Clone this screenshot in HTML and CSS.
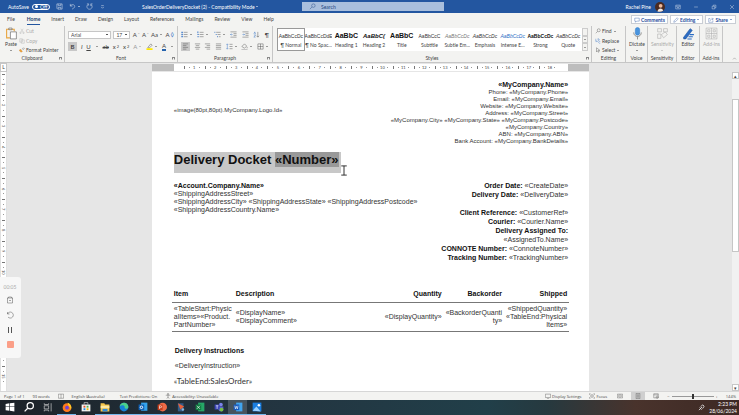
FILE: index.html
```html
<!DOCTYPE html>
<html lang="en">
<head>
    <meta charset="UTF-8">
    <meta name="viewport" content="width=device-width, initial-scale=1.0">
    <title>SalesOrderDeliveryDocket (2) - Compatibility Mode</title>
    <link rel="stylesheet" href="styles.css">
</head>
<body>

    <!-- Title bar -->
    <header class="titlebar">
        <div class="quick">
            <label class="autosave" for="autosave">AutoSave <input type="checkbox" id="autosave"><span class="switch">Off</span></label>
            <button aria-label="Save"><svg viewBox="0 0 16 16"><path d="M2 2h12v12H4l-2-2zM5 2v4h6V2M5 14v-4h6v4"/></svg></button>
            <button aria-label="Undo"><svg viewBox="0 0 16 16"><path d="M3 2v5h5M3 7c3-5 10-4 10 1 0 3-3 4-6 6"/></svg></button>
            <span class="caret"></span>
            <button aria-label="Redo"><svg viewBox="0 0 16 16"><path d="M5 3a6 6 0 1 0 6 0M11 7V2h4M2 2h4v4"/></svg></button>
            <button aria-label="Customize"><svg viewBox="0 0 16 16"><path d="M5 6h6M5 9l3 3 3-3"/></svg></button>
        </div>
        <div class="docname">SalesOrderDeliveryDocket (2) - Compatibility Mode <span class="caret"></span></div>
        <label class="search">
            <svg viewBox="0 0 16 16"><circle cx="10" cy="6" r="4"/><path d="M7 9l-5 5"/></svg>
            <input type="search" placeholder="Search" aria-label="Search">
        </label>
        <div class="account">
            <span>Rachel Pine</span>
            <svg class="avatar" viewBox="0 0 16 16"><circle cx="8" cy="8" r="8" fill="#4a2a20"/><circle cx="9" cy="6" r="3" fill="#eeb99b"/><path d="M4 15c1-6 8-6 9-1-3 2-6 2-9 1z" fill="#f2e8e2"/></svg>
        </div>
        <div class="window-buttons">
            <button aria-label="Ribbon display"><svg viewBox="0 0 16 16"><path d="M2 3h12v10H2zM2 6h12M8 12V8M6 10l2-2 2 2"/></svg></button>
            <button aria-label="Minimize"><svg viewBox="0 0 16 16"><path d="M3 8h10"/></svg></button>
            <button aria-label="Restore"><svg viewBox="0 0 16 16"><path d="M3 6h7v7H3zM6 6V3h7v7h-3"/></svg></button>
            <button aria-label="Close"><svg viewBox="0 0 16 16"><path d="M3 3l10 10M13 3L3 13"/></svg></button>
        </div>
    </header>

    <!-- Ribbon tabs -->
    <nav class="tabs">
        <a href="#" class="tab-file">File</a>
        <a href="#" class="active">Home</a>
        <a href="#">Insert</a>
        <a href="#">Draw</a>
        <a href="#">Design</a>
        <a href="#">Layout</a>
        <a href="#">References</a>
        <a href="#">Mailings</a>
        <a href="#">Review</a>
        <a href="#">View</a>
        <a href="#">Help</a>
        <div class="tab-actions">
            <button><svg viewBox="0 0 16 16"><path d="M2 3h12v8H7l-3 3v-3H2z"/></svg>Comments</button>
            <button><svg viewBox="0 0 16 16"><path d="M2 14l1-4 8-8 3 3-8 8z"/></svg>Editing <span class="caret"></span></button>
            <button><svg viewBox="0 0 16 16"><path d="M6 4H2v10h11V9M6 10c0-4 3-5 8-5M11 2l3 3-3 3"/></svg>Share <span class="caret"></span></button>
        </div>
    </nav>

    <!-- Ribbon -->
    <section class="ribbon">
        <div class="group clipboard">
            <div class="group-body">
                <button class="big">
                    <svg viewBox="0 0 24 24"><path d="M9 20H3V4h14v4" stroke="#e8a33d" stroke-width="2"/><path d="M7 5V2h6v3z" fill="#fff"/><path d="M10 9h11v13H10z" fill="#fff"/></svg>
                    Paste
                    <span class="caret"></span>
                </button>
                <div class="stack">
                    <button class="off"><svg viewBox="0 0 16 16"><path d="M5 2l6 9M11 2L5 11"/><circle cx="4" cy="13" r="2"/><circle cx="12" cy="13" r="2"/></svg>Cut</button>
                    <button class="off"><svg viewBox="0 0 16 16"><path d="M2 2h7v9H2zM6 5h8v9H6z"/></svg>Copy</button>
                    <button><svg viewBox="0 0 16 16"><path d="M8 6l4-4 2 2-4 4"/><path d="M3 6l6 5-3 3-5-4z" fill="#f0a030" stroke="#c87818"/></svg>Format Painter</button>
                </div>
            </div>
            <div class="group-name">Clipboard<i class="launcher"></i></div>
        </div>

        <div class="group font">
            <div class="group-body rows">
                <div class="row">
                    <select class="font-family" aria-label="Font"><option>Arial</option></select>
                    <select class="font-size" aria-label="Font size"><option>17</option></select>
                    <button aria-label="Grow font">A<sup>ˆ</sup></button>
                    <button aria-label="Shrink font">A<sup>ˇ</sup></button>
                    <button>Aa<span class="caret"></span></button>
                    <button aria-label="Clear formatting">A<span class="blue">◊</span></button>
                </div>
                <div class="row">
                    <button class="on"><b>B</b></button>
                    <button><i>I</i></button>
                    <button><u>U</u></button>
                    <span class="caret"></span>
                    <button><s>ab</s></button>
                    <button>x<sub>2</sub></button>
                    <button>x<sup>2</sup></button>
                    <button class="glow">A<span class="caret"></span></button>
                    <button aria-label="Highlight"><svg viewBox="0 0 16 16"><path d="M5 9l6-7 3 3-6 6H4z"/><path d="M1 14h14" stroke="#ffe800" stroke-width="4"/></svg><span class="caret"></span></button>
                    <button class="font-color">A</button>
                    <span class="caret"></span>
                </div>
            </div>
            <div class="group-name">Font<i class="launcher"></i></div>
        </div>

        <div class="group paragraph">
            <div class="group-body rows">
                <div class="row">
                    <button aria-label="Bullets"><svg viewBox="0 0 16 16"><path d="M6 3h9M6 8h9M6 13h9"/><path d="M1 3h3M1 8h3M1 13h3" stroke="#2b6cc4" stroke-width="3"/></svg><span class="caret"></span></button>
                    <button aria-label="Numbering"><svg viewBox="0 0 16 16"><path d="M6 3h9M6 8h9M6 13h9"/><path d="M2 1v4M1 8h3M1 13h3" stroke="#2b6cc4" stroke-width="2"/></svg><span class="caret"></span></button>
                    <button aria-label="Multilevel list"><svg viewBox="0 0 16 16"><path d="M5 3h10M8 8h7M11 13h4"/><path d="M1 3h2M4 8h2M7 13h2" stroke="#2b6cc4" stroke-width="2"/></svg><span class="caret"></span></button>
                    <button aria-label="Decrease indent"><svg viewBox="0 0 16 16"><path d="M1 2h14M8 6h7M8 10h7M1 14h14"/><path d="M6 8H1M3 6L1 8l2 2" stroke="#2b6cc4"/></svg></button>
                    <button aria-label="Increase indent"><svg viewBox="0 0 16 16"><path d="M1 2h14M8 6h7M8 10h7M1 14h14"/><path d="M1 8h5M4 6l2 2-2 2" stroke="#2b6cc4"/></svg></button>
                    <button aria-label="Sort"><svg viewBox="0 0 16 16"><path d="M2 7l2-5 2 5M2 9h4l-4 5h4" stroke="#2b6cc4"/><path d="M11 2v12M8 11l3 3 3-3"/></svg></button>
                    <button>¶</button>
                </div>
                <div class="row">
                    <button class="on" aria-label="Align left"><svg viewBox="0 0 16 16"><path d="M2 2h12M2 6h8M2 10h12M2 14h8"/></svg></button>
                    <button aria-label="Center"><svg viewBox="0 0 16 16"><path d="M2 2h12M4 6h8M2 10h12M4 14h8"/></svg></button>
                    <button aria-label="Align right"><svg viewBox="0 0 16 16"><path d="M2 2h12M6 6h8M2 10h12M6 14h8"/></svg></button>
                    <button aria-label="Justify"><svg viewBox="0 0 16 16"><path d="M2 2h12M2 6h12M2 10h12M2 14h12"/></svg></button>
                    <button aria-label="Line spacing"><svg viewBox="0 0 16 16"><path d="M8 3h7M8 8h7M8 13h7"/><path d="M3 2v12M1 4l2-2 2 2M1 12l2 2 2-2" stroke="#2b6cc4"/></svg><span class="caret"></span></button>
                    <button aria-label="Shading"><svg viewBox="0 0 16 16"><path d="M2 8l6-6 5 5-5 5zM14 9v3"/><path d="M1 15h14" stroke="#bbb" stroke-width="2"/></svg><span class="caret"></span></button>
                    <button aria-label="Borders"><svg viewBox="0 0 16 16"><path d="M2 2h12v12H2zM8 2v12M2 8h12"/></svg><span class="caret"></span></button>
                </div>
            </div>
            <div class="group-name">Paragraph<i class="launcher"></i></div>
        </div>

        <div class="group styles">
            <div class="group-body">
                <div class="gallery">
                    <button class="selected"><span>AaBbCcDc</span>¶ Normal</button>
                    <button><span>AaBbCcDdE</span>¶ No Spac...</button>
                    <button><span class="heading">AaBbC</span>Heading 1</button>
                    <button><span class="heading2">AaBbC(</span>Heading 2</button>
                    <button><span class="heading">AaBbC</span>Title</button>
                    <button><span class="sub">AaBbCcC</span>Subtitle</button>
                    <button><span class="subtle">AaBbCcDc</span>Subtle Em...</button>
                    <button><span class="em">AaBbCcDc</span>Emphasis</button>
                    <button><span class="intense">AaBbCcDc</span>Intense E...</button>
                    <button><span class="strong">AaBbCcDc</span>Strong</button>
                    <button><span class="em">AaBbCcDc</span>Quote</button>
                </div>
                <div class="gallery-scroll">
                    <button aria-label="Up"></button>
                    <button aria-label="Down"><span class="caret"></span></button>
                    <button aria-label="More"><span class="caret"></span></button>
                </div>
            </div>
            <div class="group-name">Styles<i class="launcher"></i></div>
        </div>

        <div class="group editing">
            <div class="group-body">
                <div class="stack">
                    <button><svg viewBox="0 0 16 16"><circle cx="10" cy="6" r="4"/><path d="M7 9l-5 5"/></svg>Find <span class="caret"></span></button>
                    <button><svg viewBox="0 0 16 16"><path d="M2 2v7h4M4 7l2 2-2 2M8 3c5-2 5 5 0 3V1M14 9c-6-1-6 6 0 5" stroke="#2b6cc4"/></svg>Replace</button>
                    <button><svg viewBox="0 0 16 16"><path d="M4 2v11l3-3 2 4 2-1-2-4h4z"/></svg>Select <span class="caret"></span></button>
                </div>
            </div>
            <div class="group-name">Editing</div>
        </div>

        <div class="group voice">
            <div class="group-body">
                <button class="big">
                    <svg viewBox="0 0 24 24"><path d="M5 10c0 10 14 10 14 0M12 18v5"/><rect x="8" y="1" width="8" height="14" rx="4" fill="#4a94dc" stroke="#2b7cd3"/></svg>
                    Dictate
                    <span class="caret"></span>
                </button>
            </div>
            <div class="group-name">Voice</div>
        </div>

        <div class="group sensitivity">
            <div class="group-body">
                <button class="big off">
                    <svg viewBox="0 0 24 24"><path d="M3 3h7v6H3zM14 3h7v6h-7zM3 13h6v8H3zM10 14l7-5 4 5-7 6z"/></svg>
                    Sensitivity
                    <span class="caret"></span>
                </button>
            </div>
            <div class="group-name">Sensitivity</div>
        </div>

        <div class="group editor">
            <div class="group-body">
                <button class="big">
                    <svg viewBox="0 0 24 24"><path d="M3 19L15 3l4 3L7 22H3z" fill="#2b6cc4" stroke="#1c4f96"/><path d="M14 14h8M12 18h8M10 22h8" stroke="#2b6cc4" stroke-width="2"/></svg>
                    Editor
                </button>
            </div>
            <div class="group-name">Editor</div>
        </div>

        <div class="group addins">
            <div class="group-body">
                <button class="big off">
                    <svg viewBox="0 0 24 24"><path d="M2 2h20v20H2zM12 2v20M2 12h20M5 5h4v4H5zM15 5h4v4h-4zM5 15h4v4H5zM15 15h4v4h-4z"/></svg>
                    Add-ins
                </button>
            </div>
            <div class="group-name">Add-ins</div>
        </div>
        <button class="collapse" aria-label="Collapse ribbon"><svg viewBox="0 0 16 16"><path d="M3 11l5-5 5 5"/></svg></button>
    </section>

    <!-- Document area -->
    <main class="workspace">
        <div class="corner">L</div>
        <div class="ruler-bar">
            <div class="ruler">
                <span>1</span><span>2</span><span>3</span><span>4</span><span>5</span><span>6</span>
                <span>7</span><span>8</span><span>9</span><span>10</span><span>11</span><span>12</span>
                <span>13</span><span>14</span><span>15</span><span>16</span><span>17</span><span>18</span>
            </div>
        </div>
        <div class="side-ruler">
            <span>1</span><span>2</span><span>3</span><span>4</span><span>5</span>
            <span>6</span><span>7</span><span>8</span><span>9</span><span>10</span>
            <span>11</span><span>12</span><span>13</span><span>14</span><span>15</span>
        </div>
        <div class="canvas">
            <article class="page">
                <div class="letterhead">
                    <p class="logo">«image(80pt,80pt).MyCompany.Logo.Id»</p>
                    <div class="company">
                        <h2>«MyCompany.Name»</h2>
                        <p>Phone: «MyCompany.Phone»</p>
                        <p>Email: «MyCompany.Email»</p>
                        <p>Website: «MyCompany.Website»</p>
                        <p>Address: «MyCompany.Street»</p>
                        <p>«MyCompany.City» «MyCompany.State» «MyCompany.Postcode»</p>
                        <p>«MyCompany.Country»</p>
                        <p>ABN: «MyCompany.ABN»</p>
                        <p>Bank Account: «MyCompany.BankDetails»</p>
                    </div>
                </div>

                <h1><span class="highlight">Delivery Docket <mark>«Number»</mark></span></h1>
                <svg class="ibeam" viewBox="0 0 8 12"><path d="M1 1h6M4 1v10M1 11h6"/></svg>

                <div class="details">
                    <address>
                        <b>«Account.Company.Name»</b>
                        <span>«ShippingAddressStreet»</span>
                        <span>«ShippingAddressCity» «ShippingAddressState» «ShippingAddressPostcode»</span>
                        <span>«ShippingAddressCountry.Name»</span>
                    </address>
                    <div class="order">
                        <p><b>Order Date:</b> «CreateDate»</p>
                        <p class="spaced"><b>Delivery Date:</b> «DeliveryDate»</p>
                        <p><b>Client Reference:</b> «CustomerRef»</p>
                        <p><b>Courier:</b> «Courier.Name»</p>
                        <p><b>Delivery Assigned To:</b></p>
                        <p>«AssignedTo.Name»</p>
                        <p><b>CONNOTE Number:</b> «ConnoteNumber»</p>
                        <p><b>Tracking Number:</b> «TrackingNumber»</p>
                    </div>
                </div>

                <table class="items">
                    <thead>
                        <tr>
                            <th class="col-item">Item</th>
                            <th>Description</th>
                            <th class="col-num">Quantity</th>
                            <th class="col-num">Backorder</th>
                            <th class="col-last">Shipped</th>
                        </tr>
                    </thead>
                    <tbody>
                        <tr>
                            <td>«TableStart:Physic<br>alItems»«Product.<br>PartNumber»</td>
                            <td>«DisplayName»<br>«DisplayComment»</td>
                            <td class="col-num">«DisplayQuantity»</td>
                            <td class="col-num">«BackorderQuanti<br>ty»</td>
                            <td class="col-last">«ShippedQuantity»<br>«TableEnd:Physical<br>Items»</td>
                        </tr>
                    </tbody>
                </table>

                <div class="instructions">
                    <h3>Delivery Instructions</h3>
                    <p>«DeliveryInstruction»</p>
                </div>
                <p class="table-end">«TableEnd:SalesOrder»</p>
            </article>
        </div>
        <div class="scrollbar">
            <button aria-label="Scroll up">▴</button>
            <div class="thumb"></div>
            <button aria-label="Scroll down">▾</button>
        </div>

        <!-- Floating screen recorder controls -->
        <aside class="recorder">
            <span>00:05</span>
            <button aria-label="Delete"><svg viewBox="0 0 16 16"><path d="M2 4h12M5 4V2h6v2M3 4v10h10V4M6 9h4"/></svg></button>
            <button aria-label="Restart"><svg viewBox="0 0 16 16"><path d="M3 2v4h4M3 6a6 6 0 1 1 1 6"/></svg></button>
            <button aria-label="Pause"><svg viewBox="0 0 16 16"><path d="M5 2v12M11 2v12" stroke-width="2"/></svg></button>
            <button class="stop" aria-label="Stop"></button>
        </aside>
    </main>

    <!-- Status bar -->
    <footer class="statusbar">
        <span>Page 1 of 1</span>
        <span>93 words</span>
        <svg viewBox="0 0 16 16"><path d="M8 3v11M8 3H1v11h7M8 3h7v11H8"/></svg>
        <span class="language">English (Australia)</span>
        <span>Text Predictions: On</span>
        <span class="with-icon"><svg viewBox="0 0 16 16"><circle cx="8" cy="3" r="2"/><path d="M2 6h12M8 6v4l-3 5M8 10l3 5"/></svg>Accessibility: Unavailable</span>
        <span class="with-icon display"><svg viewBox="0 0 16 16"><path d="M1 3h14v9H1zM5 15h6"/></svg>Display Settings</span>
        <span class="with-icon focus"><svg viewBox="0 0 16 16"><path d="M1 5V2h3M12 2h3v3M1 11v3h3M12 14h3v-3M5 5h6v6H5z"/></svg>Focus</span>
        <button aria-label="Read mode"><svg viewBox="0 0 16 16"><path d="M1 3h14v10H1zM8 3v10M3 6h3M3 9h3M10 6h3M10 9h3"/></svg></button>
        <button class="on" aria-label="Print layout"><svg viewBox="0 0 16 16"><path d="M3 1h10v14H3zM5 5h6M5 8h6M5 11h6"/></svg></button>
        <button aria-label="Web layout"><svg viewBox="0 0 16 16"><path d="M2 2h12v11H2zM2 5h12"/><circle cx="11" cy="11" r="3"/></svg></button>
        <label class="zoom"><span>−</span><input type="range" min="10" max="190" value="100" aria-label="Zoom"><span>+</span></label>
        <span class="percent">144%</span>
    </footer>

    <!-- Taskbar -->
    <nav class="taskbar">
        <button aria-label="Start"><svg viewBox="0 0 16 16"><path d="M1 3l6-1v5H1zM8 2l7-1v6H8zM1 8h6v6l-6-1zM8 8h7v7l-7-1z" fill="#fff"/></svg></button>
        <button aria-label="Search"><svg viewBox="0 0 16 16"><path d="M6 10l-5 5" stroke="#fff" stroke-width="2"/><circle cx="10" cy="6" r="5" stroke="#fff" stroke-width="2"/></svg></button>
        <button aria-label="Task view"><svg viewBox="0 0 16 16"><path d="M2 2v2h7V2M2 6h7v5H2zM2 15v-2h7v2M13 2v13" stroke="#ddd"/></svg></button>
        <button class="open" aria-label="Firefox"><svg viewBox="0 0 16 16"><circle cx="8" cy="9" r="7" fill="#ff7a1a"/><path d="M9 1c6 2 7 8 5 11-1-5-4-5-5-11z" fill="#ffc928"/><circle cx="8" cy="9" r="3" fill="#7542d6"/></svg></button>
        <button aria-label="Store"><svg viewBox="0 0 16 16"><path d="M1 4h14v11H1z" fill="#f3f3f3"/><path d="M5 4V1h6v3" stroke="#ddd"/><path d="M4 6h3v3H4z" fill="#e34c26"/><path d="M9 6h3v3H9z" fill="#4caf50"/><path d="M4 10h3v3H4z" fill="#1a8ee6"/><path d="M9 10h3v3H9z" fill="#f7b500"/></svg></button>
        <button class="open" aria-label="File Explorer"><svg viewBox="0 0 16 16"><path d="M1 2h6l1 2h7v11H1z" fill="#f7c64a"/><path d="M1 6h14v4H1z" fill="#ffe9a3"/><path d="M4 11h8v4H4z" fill="#2f8bd8"/></svg></button>
        <button class="open" aria-label="Edge"><svg viewBox="0 0 16 16"><circle cx="8" cy="8" r="7" fill="#1683d8"/><path d="M1 7c1-8 14-8 14 1 0 3-5 4-6 1 1-4-5-5-8-2z" fill="#4bd08b"/></svg></button>
        <button class="open" aria-label="Outlook"><svg viewBox="0 0 16 16"><path d="M5 1h10v13H5z" fill="#35a3ec"/><path d="M1 4h9v9H1z" fill="#0f62b8"/><circle cx="5.500" cy="8.500" r="2" stroke="#fff" stroke-width="1.500"/></svg></button>
        <button class="open" aria-label="PowerPoint"><svg viewBox="0 0 16 16"><circle cx="9" cy="8" r="7" fill="#ee6b47"/><path d="M1 4h8v9H1z" fill="#c43e1c"/><path d="M4 11V6h2c2 0 2 3 0 3H4" stroke="#fff"/></svg></button>
        <button class="open" aria-label="Paint"><svg viewBox="0 0 16 16"><path d="M3 2h9v13H3z" fill="#345d88"/><path d="M3 2l10 5-6 5z" fill="#e7603a"/><circle cx="11" cy="12" r="2" fill="#86b7df"/></svg></button>
        <button class="open" aria-label="Excel"><svg viewBox="0 0 16 16"><path d="M5 1h10v14H5z" fill="#26a567"/><path d="M1 4h9v9H1z" fill="#107c41"/><path d="M3 6l5 5M8 6l-5 5" stroke="#fff"/></svg></button>
        <button class="open" aria-label="Teams"><svg viewBox="0 0 16 16"><circle cx="11" cy="4" r="3" fill="#7b83eb"/><path d="M6 7h9v5c0 4-7 4-8 0z" fill="#5b63cf"/><path d="M1 4h8v8H1z" fill="#3c46b8"/><circle cx="12" cy="12" r="3" fill="#76c043"/><path d="M3 6h4M5 6v5" stroke="#fff"/></svg></button>
        <button class="open current" aria-label="Word"><svg viewBox="0 0 16 16"><path d="M5 1h10v14H5z" fill="#41a5ee"/><path d="M1 4h9v9H1z" fill="#185abd"/><path d="M3 6l1 5 1.500-4L7 11l1-5" stroke="#fff"/></svg></button>
        <button class="open" aria-label="Photos"><svg viewBox="0 0 16 16"><path d="M1 1h14v14H1z" fill="#1a7ee0"/><path d="M1 14l6-7 7 8z" fill="#9ad2ff"/><circle cx="11" cy="5" r="2" fill="#fff"/></svg></button>
        <div class="tray">
            <svg viewBox="0 0 16 16"><path d="M2 14l5-5M6 6l4 4M7 5l4-3 3 3-3 5M4 8l4 5" stroke="#ddd" stroke-width="2"/></svg>
            <div class="clock">2:23 PM<br>28/06/2024</div>
        </div>
    </nav>

</body>
</html>
```
FILE: styles.css
```css
:root {
    --blue: #2356a0;
    --ribbon-bg: #f3f3f1;
    --canvas-bg: #e6e6e6;
    --line: #c6c6c6;
    --ink: #444;
}

* {
    box-sizing: border-box;
}

body {
    margin: 0;
    height: 100vh;
    display: flex;
    flex-direction: column;
    overflow: hidden;
    font-family: Lato, "Open Sans", sans-serif;
    font-size: 5px;
    color: var(--ink);
    background-color: var(--ribbon-bg);
}

h1, h2, h3, p {
    margin: 0;
}

button {
    display: flex;
    align-items: center;
    justify-content: center;
    gap: 1px;
    margin: 0;
    padding: 0;
    border: none;
    background: none;
    font: inherit;
    color: inherit;
    white-space: nowrap;
}

svg {
    width: 7px;
    height: 7px;
    flex: none;
    fill: none;
    stroke: currentColor;
}

.caret {
    display: inline-block;
    flex: none;
    margin: 0 1px;
    border: 1px solid transparent;
    border-top-color: currentColor;
    border-bottom: none;
}

/* Title bar */
.titlebar {
    flex: none;
    height: 13px;
    display: flex;
    align-items: center;
    background-color: var(--blue);
    color: #fff;
}
.quick {
    flex: 0 0 142px;
    display: flex;
    align-items: center;
    gap: 6px;
    padding-left: 8px;
}
.quick .caret {
    margin: 0 0 0 -4px;
}
.autosave {
    display: flex;
    align-items: center;
    gap: 3px;
}
.autosave input {
    position: absolute;
    opacity: 0;
}
.switch {
    display: flex;
    align-items: center;
    gap: 2px;
    height: 6px;
    padding: 0 2px;
    border: 1px solid #fff;
    border-radius: 3px;
    line-height: 4px;
}
.switch::before {
    content: "";
    width: 3px;
    height: 3px;
    border-radius: 50%;
    background-color: #fff;
}
.docname {
    flex: 0 0 160px;
    display: flex;
    align-items: center;
    white-space: nowrap;
}
.search {
    flex: 0 1 142px;
    height: 9px;
    display: flex;
    align-items: center;
    gap: 5px;
    padding-left: 7px;
    background-color: #a9bfdd;
    color: #1e4480;
}
.search input {
    flex: 1;
    min-width: 0;
    padding: 0;
    border: none;
    background: none;
    font: inherit;
}
.search input::placeholder {
    color: #1e4480;
}
.account {
    margin-left: auto;
    display: flex;
    align-items: center;
    gap: 4px;
}
.avatar {
    width: 10px;
    height: 10px;
    stroke: none;
}
.window-buttons {
    display: flex;
    gap: 12px;
    padding: 0 4px 0 10px;
}
.window-buttons svg {
    width: 6px;
    height: 6px;
}

/* Tabs */
.tabs {
    flex: none;
    height: 13px;
    display: flex;
    align-items: center;
    gap: 11px;
    padding: 0 3px 0 7px;
}
.tabs a {
    height: 10px;
    line-height: 9px;
    color: var(--ink);
    text-decoration: none;
}
.tab-file {
    margin-right: 1px;
}
.tabs a.active {
    font-weight: bold;
    border-bottom: 1px solid var(--blue);
    color: #24406c;
}
.tab-actions {
    margin-left: auto;
    display: flex;
    gap: 2px;
}
.tab-actions button {
    height: 9px;
    padding: 0 2px;
    border: 1px solid #c9cdd4;
    background-color: #fff;
    color: #1f4e9c;
    font-weight: bold;
}
.tab-actions svg {
    width: 6px;
    height: 6px;
}

/* Ribbon */
.ribbon {
    flex: none;
    height: 37px;
    display: flex;
    border-bottom: 1px solid var(--line);
}
.group {
    flex: none;
    display: flex;
    flex-direction: column;
    border-right: 1px solid var(--line);
}
.clipboard {
    width: 65px;
}
.font {
    width: 113px;
}
.paragraph {
    width: 95px;
}
.styles {
    flex: 1;
    min-width: 0;
}
.editing {
    width: 34px;
}
.voice {
    width: 22px;
}
.sensitivity {
    width: 29px;
}
.editor, .addins {
    width: 23px;
}
.group-body {
    flex: 1;
    display: flex;
    padding: 1px 3px 0;
}
.group-name {
    position: relative;
    height: 7px;
    line-height: 6px;
    text-align: center;
}
.launcher {
    position: absolute;
    right: 2px;
    bottom: 2px;
    width: 3px;
    height: 3px;
    border: 1px solid #888;
    border-bottom-color: transparent;
}
.big {
    flex: 1;
    flex-direction: column;
    justify-content: flex-start;
}
.big svg {
    width: 13px;
    height: 13px;
}
.big .caret {
    margin-top: 2px;
}
.clipboard .big {
    flex: 0 0 16px;
}
.stack {
    display: flex;
    flex-direction: column;
    justify-content: space-between;
    align-items: flex-start;
    padding-bottom: 1px;
}
.stack button {
    height: 8px;
    gap: 1px;
}
.stack svg {
    width: 6px;
    height: 6px;
}
.off {
    color: #aaa;
}
.blue {
    color: #2b6cc4;
}
.rows {
    flex-direction: column;
    gap: 3px;
    padding-top: 4px;
}
.row {
    display: flex;
    align-items: center;
    justify-content: space-between;
    height: 9px;
    font-size: 6px;
}
.row sup, .row sub {
    font-size: 4px;
    line-height: 4px;
}
.row .on {
    width: 9px;
    height: 9px;
    background-color: #c8c8c8;
}
.row select {
    height: 8px;
    padding: 0 2px;
    border: 1px solid var(--line);
    appearance: none;
    background: linear-gradient(#555, #555) right 2px center / 2px 1px no-repeat #fff;
    color: var(--ink);
    font: inherit;
    font-size: 5px;
}
.font-family {
    width: 43px;
}
.font-size {
    width: 17px;
}
.glow {
    color: #999;
}
.font-color {
    height: 8px;
    border-bottom: 2px solid #2563ad;
    line-height: 6px;
}
.styles .group-body {
    padding: 2px 3px 0 4px;
}
.gallery {
    flex: 1;
    min-width: 0;
    height: 23px;
    display: grid;
    grid-template-columns: repeat(11, minmax(0, 1fr));
    background-color: #fff;
}
.gallery button {
    flex-direction: column;
    gap: 2px;
    overflow: hidden;
}
.gallery .selected {
    border: 1px solid #999;
}
.gallery span {
    height: 8px;
    line-height: 8px;
    font-family: "Liberation Sans", Arial, sans-serif;
    color: #333;
}
.gallery .heading {
    font-size: 7px;
    font-weight: bold;
    color: #111;
}
.gallery .heading2 {
    font-size: 6px;
    font-weight: bold;
    font-style: italic;
    color: #111;
}
.gallery .sub {
    font-size: 5px;
}
.gallery .subtle {
    font-style: italic;
    color: #777;
}
.gallery .em {
    font-style: italic;
}
.gallery .intense {
    font-style: italic;
    color: #2b6cc4;
}
.gallery .strong {
    font-weight: bold;
    color: #111;
}
.gallery-scroll {
    width: 6px;
    height: 23px;
    display: flex;
    flex-direction: column;
}
.gallery-scroll button {
    flex: 1;
    border: 1px solid #ccc;
}
.collapse {
    flex: 0 0 16px;
    align-items: flex-end;
    padding: 0 0 1px 6px;
}
.collapse svg {
    width: 5px;
    height: 5px;
}

/* Workspace */
.workspace {
    position: relative;
    flex: 1;
    min-height: 0;
    display: grid;
    grid-template-columns: 7px minmax(0, 1fr) 7px;
    grid-template-rows: 9px minmax(0, 1fr);
    background-color: var(--canvas-bg);
}
.corner {
    border: 1px solid var(--line);
    background-color: #fff;
    line-height: 6px;
    text-align: center;
}
.ruler-bar {
    grid-column: 2 / 4;
    display: flex;
    justify-content: center;
    padding: 1px 10px 1px 5px;
}
.ruler {
    width: 61%;
    display: grid;
    grid-template-columns: repeat(18, minmax(0, 1fr));
    padding: 0 29px 0 32px;
    background: linear-gradient(90deg, #bdbdbd 22px, #fff 22px, #fff calc(100% - 21px), #bdbdbd calc(100% - 21px));
    font-size: 4px;
    line-height: 7px;
    text-align: center;
}
.ruler span {
    background:
        linear-gradient(#777, #777) left center / 1px 3px no-repeat,
        linear-gradient(#999, #999) 25% center / 1px 1px no-repeat,
        linear-gradient(#999, #999) 75% center / 1px 1px no-repeat;
}
.side-ruler {
    display: flex;
    flex-direction: column;
    padding: 2px 0 4px;
    background-color: #fff;
    border: 1px solid #e0e0e0;
    border-width: 0 1px;
    font-size: 4px;
    line-height: 5px;
}
.side-ruler span {
    flex: 1;
    writing-mode: vertical-rl;
    text-align: center;
    background:
        linear-gradient(#777, #777) center top / 3px 1px no-repeat,
        linear-gradient(#999, #999) center 25% / 1px 1px no-repeat,
        linear-gradient(#999, #999) center 75% / 1px 1px no-repeat;
}
.canvas {
    display: flex;
    justify-content: center;
    padding: 0 3px 0 5px;
    overflow: hidden;
}

/* Page */
.page {
    position: relative;
    width: 61%;
    height: 100%;
    padding: 9px 21px 0 22px;
    background-color: #fff;
    color: #333;
    font-family: "Liberation Sans", Arial, sans-serif;
    font-size: 7px;
    line-height: 8px;
}
.page b, .page h1, .page h2, .page h3, .page th {
    color: #111;
    font-weight: bold;
}
.letterhead {
    display: flex;
    justify-content: space-between;
    align-items: center;
    font-size: 6px;
    line-height: 7px;
}
.logo {
    padding-bottom: 6px;
}
.company {
    text-align: right;
}
.company h2 {
    font-size: 7px;
    line-height: 8px;
}
.page h1 {
    height: 21px;
    margin-top: 7px;
    font-size: 13px;
    line-height: 15px;
}
.highlight {
    display: inline-block;
    height: 21px;
    padding-right: 2px;
    background-color: #c8c8c8;
}
.highlight mark {
    display: inline-block;
    background-color: #999;
    color: inherit;
}
.ibeam {
    position: absolute;
    left: 188px;
    top: 93px;
    width: 8px;
    height: 11px;
    stroke: #222;
}
.details {
    display: flex;
    justify-content: space-between;
    margin-top: 8px;
}
address {
    display: flex;
    flex-direction: column;
    font-style: normal;
}
address b {
    line-height: 9px;
}
.order {
    line-height: 9px;
    text-align: right;
}
.order .spaced {
    margin-bottom: 9px;
}
.items {
    width: calc(100% + 3px);
    margin: 26px 0 0 -2px;
    border-collapse: collapse;
}
.items th, .items td {
    padding: 2px;
    text-align: left;
    border-bottom: 1px solid #777;
}
.items th {
    padding: 2px 2px 4px;
}
.items .col-item {
    width: 61px;
}
.items .col-num {
    width: 60px;
    text-align: right;
}
.items .col-last {
    width: 64px;
    text-align: right;
}
.instructions {
    display: flex;
    flex-direction: column;
    gap: 7px;
    margin-top: 15px;
    padding-left: 1px;
}
.instructions h3 {
    font-size: 7px;
}
.table-end {
    margin-top: 7px;
    font-family: Lato, sans-serif;
    font-size: 8px;
}

.scrollbar {
    display: flex;
    flex-direction: column;
    background-color: #f1f1f1;
}
.scrollbar button {
    height: 7px;
    border: 1px solid var(--line);
    background-color: #fff;
}
.thumb {
    flex: 0 0 48%;
    margin: 20px 0 auto;
    border: 1px solid var(--line);
    background-color: #fff;
}

.recorder {
    position: absolute;
    left: 0;
    bottom: 33px;
    width: 21px;
    display: flex;
    flex-direction: column;
    align-items: center;
    gap: 7px;
    padding: 8px 1px 10px 0;
    border-radius: 0 3px 3px 0;
    background-color: #f7f7f7;
    color: #555;
}
.recorder span {
    line-height: 4px;
    color: #aaa;
}
.recorder svg {
    width: 8px;
    height: 8px;
}
.recorder .stop {
    width: 7px;
    height: 7px;
    border-radius: 1px;
    background-color: #fb9f88;
}

/* Status bar */
.statusbar {
    flex: none;
    height: 9px;
    display: flex;
    align-items: center;
    gap: 8px;
    padding: 0 3px 0 4px;
    border-top: 1px solid #d6d6d6;
    font-family: "Open Sans", sans-serif;
    font-size: 4px;
    white-space: nowrap;
}
.statusbar svg {
    width: 6px;
    height: 6px;
}
.language {
    margin-right: 7px;
}
.with-icon {
    display: flex;
    align-items: center;
    gap: 1px;
}
.display {
    margin-left: auto;
}
.focus {
    margin-right: 2px;
}
.statusbar .on {
    width: 14px;
    height: 8px;
    background-color: #cfcfcf;
}
.zoom {
    display: flex;
    align-items: center;
    gap: 2px;
}
.zoom input {
    width: 42px;
    height: 6px;
    margin: 0;
    appearance: none;
    background: linear-gradient(#999, #999) center / 100% 1px no-repeat;
}
.zoom input::-webkit-slider-thumb {
    appearance: none;
    width: 2px;
    height: 5px;
    background-color: #333;
}

/* Taskbar */
.taskbar {
    flex: none;
    height: 15px;
    display: flex;
    background: linear-gradient(90deg, #1c2228 0%, #233440 35%, #213f49 66%, #26393f 74%, #49332c 86%, #3d2924 100%);
    color: #fff;
}
.taskbar button {
    flex: 0 0 19px;
    border-bottom: 1px solid transparent;
}
.taskbar svg {
    width: 10px;
    height: 10px;
}
.taskbar svg [fill] {
    stroke: none;
}
.taskbar .open {
    border-bottom-color: #76b9ed;
}
.taskbar .current {
    background-color: #46545e;
}
.tray {
    margin-left: auto;
    display: flex;
    align-items: center;
    gap: 4px;
    padding-right: 2px;
}
.tray svg {
    width: 7px;
    height: 7px;
}
.clock {
    font-size: 5px;
    line-height: 7px;
    text-align: right;
}
```
